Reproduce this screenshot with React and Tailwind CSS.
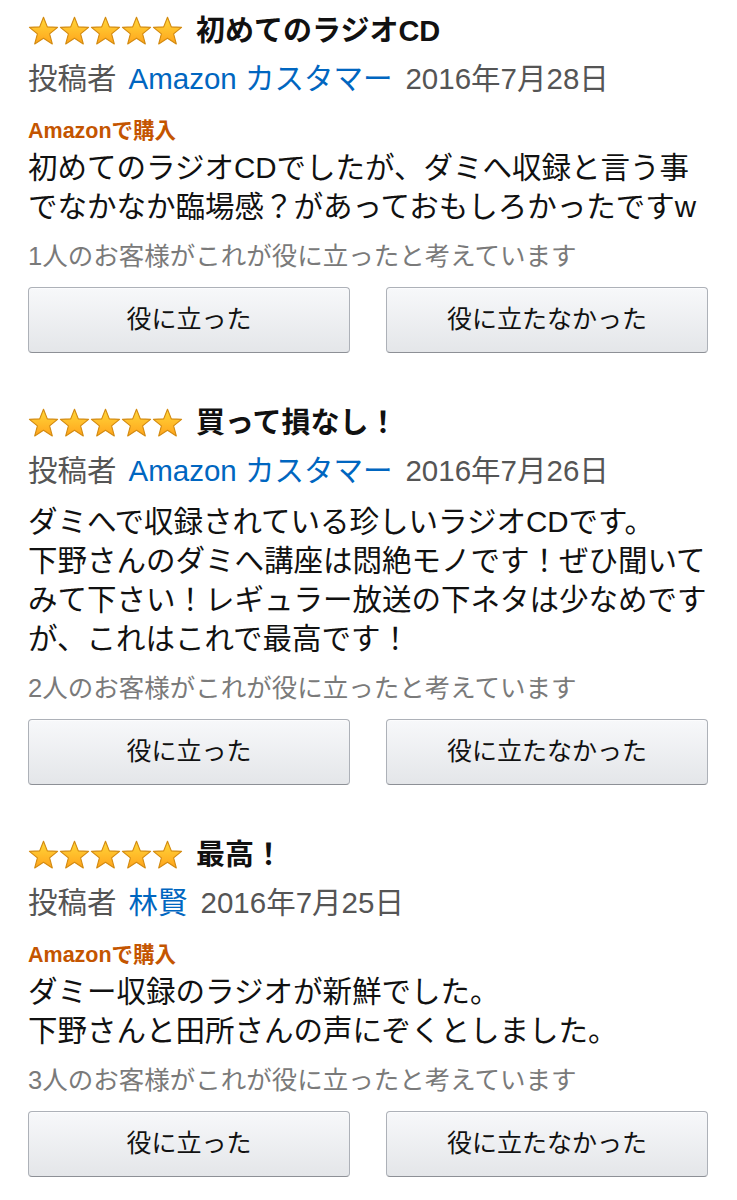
import React from "react";

const FONT = { fontFamily: '"Liberation Sans", "Noto Sans CJK JP", sans-serif' };

function Star({ id }) {
  return (
    <svg width="31" height="30" viewBox="0 0 30 29" className="shrink-0">
      <defs>
        <linearGradient id={id} x1="0" y1="0" x2="0" y2="1">
          <stop offset="0%" stopColor="#ffd83a" />
          <stop offset="100%" stopColor="#ffa41c" />
        </linearGradient>
      </defs>
      <polygon
        points="15,1.2 18.7,10.5 28.6,11 20.9,17.3 23.5,27 15,21.5 6.5,27 9.1,17.3 1.4,11 11.3,10.5"
        fill={`url(#${id})`}
        stroke="#d38a10"
        strokeWidth="1.1"
        strokeLinejoin="round"
      />
    </svg>
  );
}

function Stars({ k }) {
  return (
    <div className="flex items-center">
      {[0, 1, 2, 3, 4].map((i) => (
        <Star key={i} id={`g${k}${i}`} />
      ))}
    </div>
  );
}

function Btn({ children }) {
  return (
    <div className="flex h-[66px] items-center justify-center rounded-[4px] border border-[#adb1b8] border-b-[#8d9096] bg-gradient-to-b from-[#f7f8fa] to-[#e4e6e9] text-[25px] text-[#111] shadow-[inset_0_1px_0_rgba(255,255,255,0.6)]">
      {children}
    </div>
  );
}

function Review({ k, title, author, date, verified, lines, helpful, first }) {
  return (
    <div className={first ? "" : "mt-[50px]"}>
      <div className="flex h-[40px] items-center">
        <Stars k={k} />
        <div className="ml-[13px] text-[29px] font-bold leading-[40px] text-[#111]">{title}</div>
      </div>
      <div className="mt-[6px] flex items-center whitespace-nowrap text-[29.5px] leading-[44px] text-[#555]">
        <span>投稿者</span>
        <span className="ml-[12px] text-[#0066c0]">{author}</span>
        <span className="ml-[13px]">{date}</span>
      </div>
      {verified ? (
        <>
          <div className="mt-[17px] text-[21.5px] font-bold leading-[26px] text-[#c45500]">Amazonで購入</div>
          <div className="mt-[4px] text-[29.5px] leading-[39px] text-[#111]">
            {lines.map((l, i) => (
              <div key={i} className="whitespace-nowrap">{l}</div>
            ))}
          </div>
        </>
      ) : (
        <div className="mt-[9px] text-[29.5px] leading-[39px] text-[#111]">
          {lines.map((l, i) => (
            <div key={i} className="whitespace-nowrap">{l}</div>
          ))}
        </div>
      )}
      <div className="mt-[14px] whitespace-nowrap text-[25.5px] leading-[32px] text-[#7a7a7a]">{helpful}</div>
      <div className="mt-[15px] grid grid-cols-2 gap-[36px]">
        <Btn>役に立った</Btn>
        <Btn>役に立たなかった</Btn>
      </div>
    </div>
  );
}

export default function App() {
  return (
    <div className="min-h-[1200px] w-[737px] bg-white pl-[28px] pr-[29px] pt-[11px]" style={FONT}>
      <Review
        k="a"
        first
        title="初めてのラジオCD"
        author="Amazon カスタマー"
        date="2016年7月28日"
        verified
        lines={["初めてのラジオCDでしたが、ダミへ収録と言う事", "でなかなか臨場感？があっておもしろかったですw"]}
        helpful="1人のお客様がこれが役に立ったと考えています"
      />
      <Review
        k="b"
        title="買って損なし！"
        author="Amazon カスタマー"
        date="2016年7月26日"
        lines={[
          "ダミへで収録されている珍しいラジオCDです。",
          "下野さんのダミへ講座は悶絶モノです！ぜひ聞いて",
          "みて下さい！レギュラー放送の下ネタは少なめです",
          "が、これはこれで最高です！",
        ]}
        helpful="2人のお客様がこれが役に立ったと考えています"
      />
      <Review
        k="c"
        title="最高！"
        author="林賢"
        date="2016年7月25日"
        verified
        lines={["ダミー収録のラジオが新鮮でした。", "下野さんと田所さんの声にぞくとしました。"]}
        helpful="3人のお客様がこれが役に立ったと考えています"
      />
    </div>
  );
}
